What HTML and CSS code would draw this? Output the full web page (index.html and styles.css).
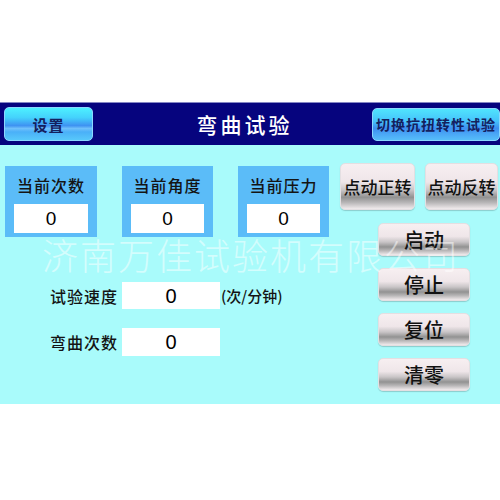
FILE: index.html
```html
<!DOCTYPE html>
<html>
<head>
    <meta charset="utf-8">
    <title>弯曲试验</title>
    <link rel="stylesheet" href="styles.css">
</head>
<body>
    <div class="screen">
        <header class="topbar">
            <button class="btn-blue btn-settings">设置</button>
            <h1 class="title">弯曲试验</h1>
            <button class="btn-blue btn-switch">切换抗扭转性试验</button>
        </header>
        <main class="work-area">
            <section class="left-col">
                <div class="readouts">
                    <div class="readout readout-wide">
                        <div class="readout-label">当前次数</div>
                        <div class="readout-value">0</div>
                    </div>
                    <div class="readout">
                        <div class="readout-label">当前角度</div>
                        <div class="readout-value">0</div>
                    </div>
                    <div class="readout">
                        <div class="readout-label">当前压力</div>
                        <div class="readout-value">0</div>
                    </div>
                </div>
                <div class="param-row">
                    <span class="param-label">试验速度</span>
                    <span class="param-value">0</span>
                    <span class="param-unit">(次/分钟)</span>
                </div>
                <div class="param-row param-row-2">
                    <span class="param-label">弯曲次数</span>
                    <span class="param-value">0</span>
                </div>
            </section>
            <section class="right-col">
                <div class="jog">
                    <button class="btn-silver btn-jog">点动正转</button>
                    <button class="btn-silver btn-jog btn-jog-2">点动反转</button>
                </div>
                <div class="controls">
                    <button class="btn-silver btn-ctrl">启动</button>
                    <button class="btn-silver btn-ctrl">停止</button>
                    <button class="btn-silver btn-ctrl">复位</button>
                    <button class="btn-silver btn-ctrl">清零</button>
                </div>
            </section>
        </main>
        <div class="watermark">济南万佳试验机有限公司</div>
    </div>
</body>
</html>
```

FILE: styles.css
```css
body { margin: 0; background: #fff; font-family: "Noto Sans CJK SC", sans-serif; }
button { font-family: "Noto Sans CJK SC", sans-serif; padding: 0; cursor: pointer; }

.screen { position: relative; margin-top: 102px; width: 500px; }

/* top bar */
.topbar { height: 43px; box-sizing: border-box; border-top: 1px solid #8486c4; background: #06047e; display: grid; grid-template-columns: 93px 1fr 128px; align-items: center; }
.title { margin: 0; padding-left: 24px; text-align: center; color: #fff; font-size: 21px; font-weight: 500; letter-spacing: 3px; line-height: 1; }
.btn-blue { height: 34px; border: 1px solid #8ad8ff; border-radius: 5px; color: #14205e; font-weight: bold; background: linear-gradient(to bottom, #4df0ff 0%, #44d2fc 30%, #3e92f2 55%, #6fc0fb 64%, #4ab0f8 75%, #57c8fb 100%); }
.btn-settings { margin-left: 4px; width: 89px; font-size: 15px; letter-spacing: 1px; }
.btn-switch { width: 128px; height: 33px; font-size: 14px; letter-spacing: 1px; background: linear-gradient(to bottom, #50e4fd 0%, #45c2fb 40%, #3c8ef0 62%, #4aa6f6 80%, #56bdf9 100%); }

/* cyan work area */
.work-area { height: 259px; background: #a9fbfb; display: flex; }
.left-col { width: 330px; padding: 21px 0 0 5px; box-sizing: border-box; }
.right-col { flex: 1; padding-top: 18px; }

.readouts { display: flex; gap: 25px; }
.readout { width: 91px; height: 71px; background: #5bbcf8; box-sizing: border-box; padding: 0 9px 4px; }
.readout-wide { width: 92px; }
.readout-label { height: 38px; line-height: 38px; text-align: center; font-size: 16px; font-weight: 500; letter-spacing: 1px; color: #141414; }
.readout-value { height: 29px; line-height: 29px; background: #fff; text-align: center; font-family: "Liberation Sans", sans-serif; font-size: 19px; color: #000; }

.param-row { display: flex; align-items: center; margin-top: 45px; height: 27px; }
.param-row-2 { margin-top: 19px; height: 28px; }
.param-label { width: 113px; margin-right: 4px; text-align: right; font-size: 16px; font-weight: 500; letter-spacing: 1px; color: #141414; }
.param-value { width: 98px; height: 100%; line-height: 28px; background: #fff; text-align: center; font-family: "Liberation Sans", sans-serif; font-size: 20px; color: #000; }
.param-unit { margin-left: 1px; font-size: 15px; font-weight: 500; color: #141414; }

/* silver push buttons */
.btn-silver { border: 1px solid #e4dfe2; border-radius: 5px; color: #111; font-weight: 500; background: linear-gradient(to bottom, #f7eff1 0%, #efe6e9 40%, #c9c5c7 58%, #929292 74%, #b9b7b8 86%, #f1ebed 100%); box-shadow: 0 1px 1px rgba(80, 120, 120, 0.35); }
.jog { display: flex; gap: 10px; padding-left: 10px; }
.btn-jog { width: 75px; height: 47px; font-size: 17px; }
.btn-jog-2 { width: 73px; }
.controls { display: flex; flex-direction: column; gap: 12px; margin-top: 13px; padding-left: 48px; }
.btn-ctrl { width: 92px; height: 33px; font-size: 20px; line-height: 1; }

/* company mark printed across the panel */
.watermark { position: absolute; left: 42px; top: 134px; font-size: 36px; line-height: 1; letter-spacing: 2px; font-weight: 300; color: rgba(255, 255, 255, 0.5); white-space: nowrap; pointer-events: none; }
```
